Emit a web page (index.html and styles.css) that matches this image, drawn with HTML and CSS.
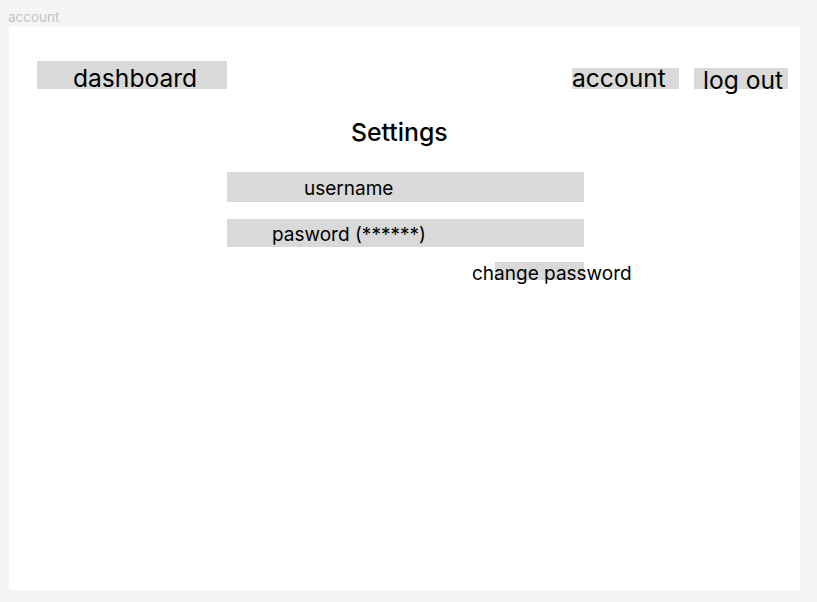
FILE: index.html
```html
<!DOCTYPE html>
<html>
<head>
<meta charset="utf-8">
<link rel="stylesheet" href="styles.css">
</head>
<body>
<div class="frame-label">account</div>
<div class="frame">
  <header class="topbar">
    <div class="btn btn-dashboard">dashboard</div>
    <nav class="nav">
      <div class="btn btn-account">account</div>
      <div class="btn btn-logout">log out</div>
    </nav>
  </header>
  <main class="settings">
    <h1 class="title">Settings</h1>
    <div class="field field-user">username</div>
    <div class="field field-pass">pasword (******)</div>
    <div class="change-row"><span class="change">change password</span></div>
  </main>
</div>
</body>
</html>
```

FILE: styles.css
```css
* { box-sizing: border-box; }
html, body {
  margin: 0;
  padding: 0;
  background: #f5f5f5;
  font-family: Inter, "Noto Sans", sans-serif;
  color: #000;
}
.frame-label {
  height: 27px;
  padding: 9px 0 0 8px;
  font-size: 13.5px;
  line-height: 16px;
  color: #c4c4c4;
}
.frame {
  margin-left: 9px;
  width: 791px;
  height: 563px;
  background: #fff;
}
.topbar {
  display: flex;
  justify-content: space-between;
  align-items: flex-end;
  padding: 34px 12px 0 28px;
}
.btn {
  background: #d9d9d9;
  font-size: 24.6px;
  white-space: nowrap;
}
.btn-dashboard {
  width: 190px;
  height: 28px;
  padding-left: 36px;
  line-height: 35px;
}
.nav {
  display: flex;
  gap: 15px;
  align-items: flex-end;
}
.btn-account {
  width: 107px;
  height: 21px;
  line-height: 20px;
}
.btn-logout {
  width: 94px;
  height: 21px;
  padding-left: 9px;
  line-height: 24px;
}
.settings {
  padding-left: 218px;
}
.title {
  margin: 0;
  padding: 30px 0 0 124px;
  font-size: 24.8px;
  font-weight: 500;
  line-height: 26px;
}
.field {
  width: 357px;
  background: #d9d9d9;
  font-size: 19px;
  white-space: nowrap;
}
.field-user {
  margin-top: 27px;
  height: 30px;
  line-height: 34px;
  padding-left: 77px;
}
.field-pass {
  margin-top: 17px;
  height: 28px;
  line-height: 32px;
  padding-left: 45px;
}
.change-row {
  margin-top: 16px;
  padding-left: 245px;
}
.change {
  position: relative;
  z-index: 0;
  display: inline-block;
  font-size: 19px;
  line-height: 22px;
  white-space: nowrap;
}
.change::before {
  content: "";
  position: absolute;
  left: 23px;
  top: -1px;
  width: 89px;
  height: 18px;
  background: #d9d9d9;
  z-index: -1;
}
```
